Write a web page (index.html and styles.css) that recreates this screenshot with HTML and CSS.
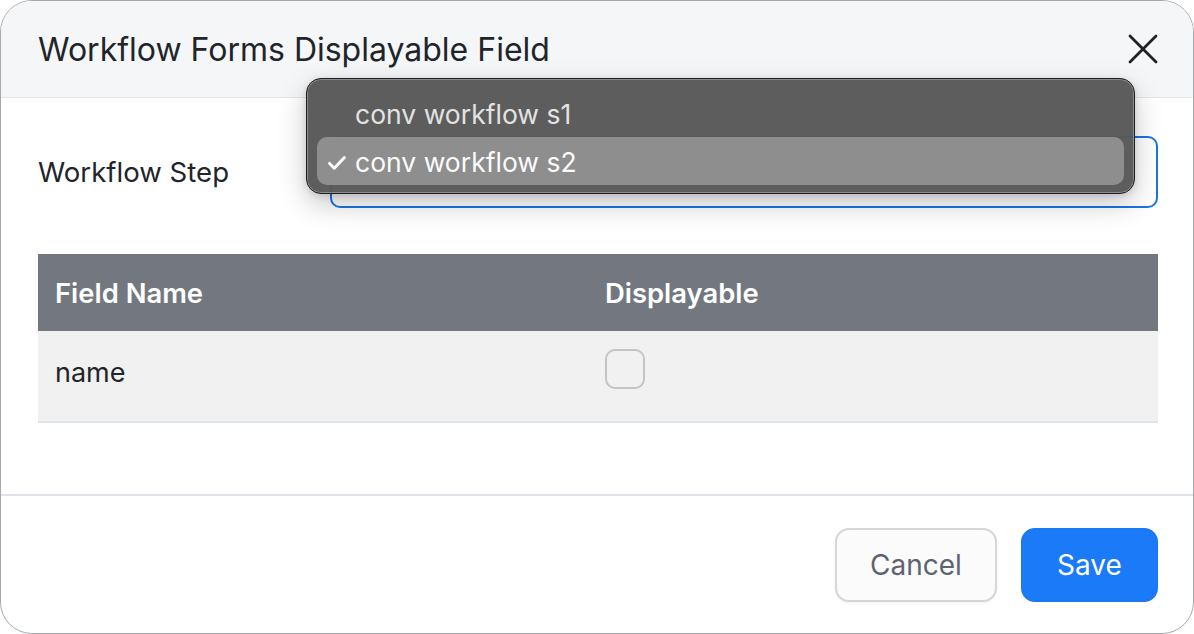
FILE: index.html
```html
<!DOCTYPE html>
<html lang="en">
<head>
<meta charset="utf-8">
<title>Workflow Forms Displayable Field</title>
<link rel="stylesheet" href="styles.css">
</head>
<body>
<div class="modal">
  <div class="modal-header">
    <h1 class="modal-title">Workflow Forms Displayable Field</h1>
    <button class="close-btn" aria-label="Close">
      <svg width="30" height="30" viewBox="0 0 30 30"><path d="M2 2 L28 28 M28 2 L2 28" stroke="#1f2125" stroke-width="2.8" stroke-linecap="round" fill="none"/></svg>
    </button>
  </div>
  <div class="modal-body">
    <div class="form-row">
      <label class="form-label">Workflow Step</label>
      <div class="select-box"></div>
    </div>
    <table class="fields">
      <thead>
        <tr><th class="col-name">Field Name</th><th>Displayable</th></tr>
      </thead>
      <tbody>
        <tr><td class="col-name">name</td><td class="col-check"><span class="checkbox"></span></td></tr>
      </tbody>
    </table>
  </div>
  <div class="modal-footer">
    <button class="btn btn-cancel">Cancel</button>
    <button class="btn btn-save">Save</button>
  </div>

  <div class="popup-menu">
    <div class="menu-item">conv workflow s1</div>
    <div class="menu-item selected">
      <svg class="tick" width="18" height="14" viewBox="0 0 18 14"><path d="M1.6 7.4 L6.3 12.3 L16.4 1.6" stroke="#ffffff" stroke-width="2.9" stroke-linecap="round" stroke-linejoin="round" fill="none"/></svg>
      conv workflow s2
    </div>
  </div>
</div>
</body>
</html>
```
FILE: styles.css
```css
* { box-sizing: border-box; }

html, body {
  margin: 0;
  padding: 0;
  background: #ffffff;
}

body {
  font-family: "Inter", "Noto Sans", sans-serif;
  color: #212529;
}

.modal {
  position: relative;
  width: 1194px;
  height: 634px;
  border: 1px solid #a4a9b1;
  border-radius: 32px;
  overflow: hidden;
  display: flex;
  flex-direction: column;
  background: #fff;
}

.modal-header {
  height: 97px;
  flex: none;
  background: #f5f6f8;
  border-bottom: 1px solid #e3e5e9;
  display: flex;
  align-items: center;
  justify-content: space-between;
  padding: 0 35px 0 37px;
}

.modal-title {
  margin: 0;
  font-size: 32px;
  font-weight: 400;
  color: #212529;
}

.close-btn {
  border: 0;
  background: none;
  padding: 0;
  width: 30px;
  height: 30px;
  display: flex;
}

.modal-body {
  flex: 1;
  padding: 38px 35px 0 37px;
}

.form-row {
  display: flex;
  align-items: center;
  height: 72px;
}

.form-label {
  width: 292px;
  font-size: 27.6px;
  color: #212529;
}

.select-box {
  flex: 1;
  height: 72px;
  border: 2px solid #1a73e8;
  border-radius: 10px;
  background: #fff;
}

.fields {
  width: 100%;
  margin-top: 46px;
  border-collapse: collapse;
  font-size: 27px;
}

.fields th {
  background: #737880;
  color: #fff;
  font-size: 27.4px;
  font-weight: 600;
  text-align: left;
  height: 77px;
  padding: 0 17px;
}

.fields th.col-name,
.fields td.col-name {
  width: 550px;
}

.fields td {
  background: #f1f1f1;
  height: 91px;
  padding: 0 17px 7px;
  border-bottom: 2px solid #dde6ea;
  color: #212529;
}

.fields td.col-check {
  vertical-align: top;
  padding-top: 18px;
  padding-bottom: 0;
}

.checkbox {
  display: block;
  width: 40px;
  height: 40px;
  border: 2px solid #c3c4c6;
  border-radius: 10px;
  background: #f1f1f1;
}

.modal-footer {
  flex: none;
  height: 139px;
  border-top: 2px solid #e0e2e8;
  display: flex;
  justify-content: flex-end;
  align-items: flex-start;
  gap: 24px;
  padding: 32px 35px 0 0;
}

.btn {
  font-family: inherit;
  font-size: 28px;
  height: 74px;
  border-radius: 14px;
  padding: 0;
}

.btn-cancel {
  background: #fbfbfb;
  border: 2px solid #d5d6da;
  color: #5d6470;
  width: 162px;
  box-shadow: 0 1px 3px rgba(0,0,0,0.06);
}

.btn-save {
  background: #1a7af8;
  border: 2px solid #1a78f2;
  color: #fff;
  width: 137px;
}

/* native-style popup list of the workflow step select */
.popup-menu {
  position: absolute;
  left: 305px;
  top: 77px;
  width: 829px;
  height: 116px;
  padding: 10px 10px 9px 10px;
  background: rgba(88, 88, 88, 0.97);
  border: 1px solid #1e1e1e;
  border-radius: 15px;
  box-shadow: inset 0 0 0 1px #8b8d93, 0 10px 28px rgba(0,0,0,0.22), 0 2px 6px rgba(0,0,0,0.12);
}

.menu-item {
  position: relative;
  height: 48px;
  line-height: 51px;
  padding-left: 38px;
  font-size: 26.5px;
  color: #e3e3e3;
  border-radius: 10px;
}

.menu-item.selected {
  background: #8e8e8e;
  color: #fbfbfb;
}

.tick {
  position: absolute;
  left: 11px;
  top: 19px;
}
```
